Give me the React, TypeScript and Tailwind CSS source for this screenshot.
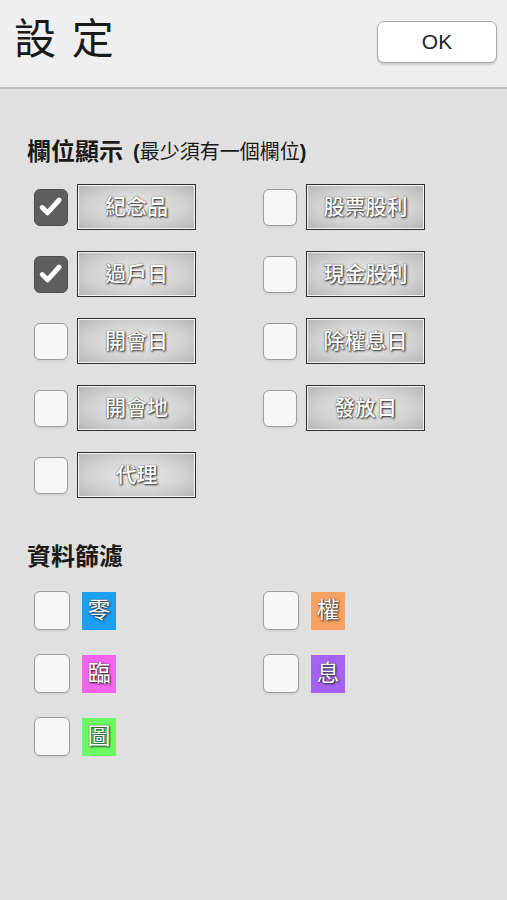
import { useState } from 'react'

const columns = [
  { label: '紀念品', checked: true },
  { label: '股票股利', checked: false },
  { label: '過戶日', checked: true },
  { label: '現金股利', checked: false },
  { label: '開會日', checked: false },
  { label: '除權息日', checked: false },
  { label: '開會地', checked: false },
  { label: '發放日', checked: false },
  { label: '代理', checked: false },
]

const filters = [
  { tag: '零', color: 'bg-[#1a9ff5]' },
  { tag: '權', color: 'bg-[#f8a261]' },
  { tag: '臨', color: 'bg-[#f464ee]' },
  { tag: '息', color: 'bg-[#a462f2]' },
  { tag: '圖', color: 'bg-[#68fb63]' },
]

function CheckBox({ checked, onClick, size }: { checked: boolean; onClick: () => void; size: 'sm' | 'lg' }) {
  const dims = size === 'sm' ? 'w-[34px] h-[37px]' : 'w-[36px] h-[39px]'
  return (
    <button
      onClick={onClick}
      className={`${dims} shrink-0 rounded-[6px] flex items-center justify-center ${
        checked
          ? 'bg-[#5e5e5e] border border-[#505050]'
          : 'bg-[#f7f7f7] border-[1.5px] border-[#9c9c9c] shadow-[0_2px_2px_rgba(0,0,0,0.06)]'
      }`}
    >
      {checked && (
        <svg className="w-[28px] h-[28px]" viewBox="0 0 24 24" fill="none">
          <path d="M4.5 12.5l4.5 4.5 10-11" stroke="white" strokeWidth={4.2} strokeLinecap="round" strokeLinejoin="round" />
        </svg>
      )}
    </button>
  )
}

export default function App() {
  const [cols, setCols] = useState(columns.map((c) => c.checked))
  const [flt, setFlt] = useState(filters.map(() => false))

  return (
    <div className="w-[507px] h-[900px] bg-[#e0e0e0] font-['Liberation_Sans','Noto_Sans_CJK_TC',sans-serif] text-[#1a1a1a]">
      {/* Header */}
      <header className="h-[89px] bg-[#efefef] border-b-2 border-[#bdbdbd] flex items-center justify-between pl-[14px] pr-[10px]">
        <h1 className="text-[42px] leading-none font-normal tracking-[2px] -mt-[8px]">設 定</h1>
        <button className="w-[120px] h-[42px] -mt-[4px] bg-white rounded-[7px] border border-[#a8a8a8] shadow-[0_2px_2px_rgba(0,0,0,0.15)] text-[21px] text-[#222]">
          OK
        </button>
      </header>

      <div className="px-[27px] pt-[47px]">
        {/* 欄位顯示 */}
        <h2 className="h-[32px] flex items-center text-[24px] font-bold">
          欄位顯示
          <span className="ml-[10px] text-[20px] font-bold">(</span>
          <span className="text-[20px] font-normal">最少須有一個欄位</span>
          <span className="text-[20px] font-bold">)</span>
        </h2>

        <div className="mt-[16px] ml-[7px] grid grid-cols-[229px_229px] gap-y-[21px]">
          {columns.map((c, i) => (
            <div key={c.label} className="flex items-center gap-[9px] h-[46px]">
              <CheckBox
                size="sm"
                checked={cols[i]}
                onClick={() => setCols(cols.map((v, j) => (j === i ? !v : v)))}
              />
              <div className="w-[119px] h-[46px] border border-[#2e2e2e] shadow-[inset_0_0_0_1px_#f4f4f4] bg-[radial-gradient(ellipse_at_center,#ececec_0%,#d0d0d0_60%,#b4b4b4_100%)] flex items-center justify-center text-[21px] font-medium text-white [text-shadow:1px_1px_2px_#222,0_0_1px_#333]">
                {c.label}
              </div>
            </div>
          ))}
        </div>

        {/* 資料篩濾 */}
        <h2 className="mt-[43px] h-[32px] flex items-center text-[24px] font-bold">資料篩濾</h2>

        <div className="mt-[18px] ml-[7px] grid grid-cols-[229px_229px] gap-y-[24px]">
          {filters.map((f, i) => (
            <div key={f.tag} className="flex items-center gap-[12px] h-[39px]">
              <CheckBox
                size="lg"
                checked={flt[i]}
                onClick={() => setFlt(flt.map((v, j) => (j === i ? !v : v)))}
              />
              <div className={`w-[34px] h-[38px] ${f.color} flex items-center justify-center text-[23px] text-white [text-shadow:1px_1px_2px_#222,0_0_1px_#333]`}>
                {f.tag}
              </div>
            </div>
          ))}
        </div>
      </div>
    </div>
  )
}
